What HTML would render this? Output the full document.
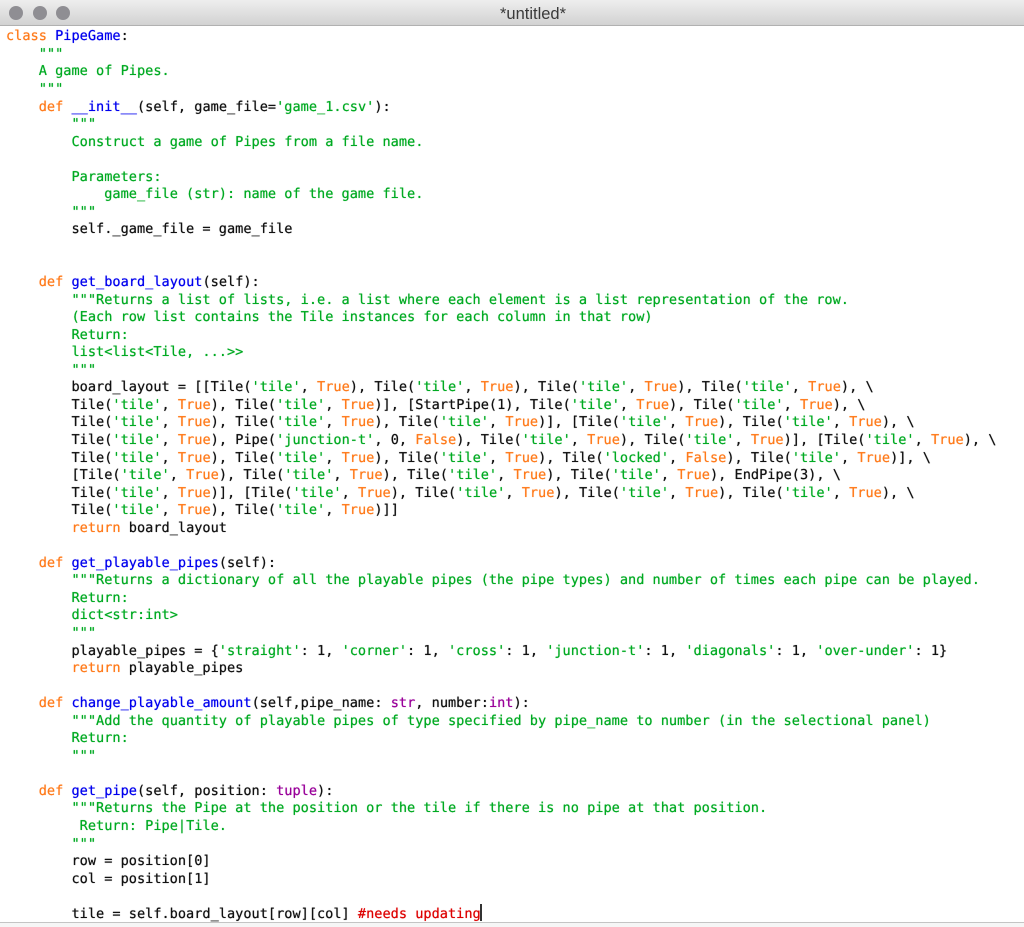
<!DOCTYPE html>
<html><head><meta charset="utf-8"><title>*untitled*</title>
<style>
html,body{margin:0;padding:0;background:#fff}
body{width:1024px;height:927px;position:relative;overflow:hidden}
#bar{position:absolute;left:0;top:0;width:1024px;height:25px;background:linear-gradient(#eeeeee,#d2d2d2);border-bottom:1px solid #b1b1b1}
.d{position:absolute;top:6px;width:14px;height:14px;border-radius:50%;background:#8f8e93}
#t{position:absolute;left:0;width:1066px;top:5px;text-align:center;font:16.5px/18px "Liberation Sans",sans-serif;color:#3a3a3a}
pre{position:absolute;left:6px;top:28.4px;margin:0;font:13.6px/17.55px "DejaVu Sans Mono",monospace;color:#111;text-rendering:geometricPrecision;white-space:pre;text-shadow:0 0 .6px currentColor}
.o{color:#ff7a1a}.g{color:#00aa22}.b{color:#0000ee}.p{color:#990099}.r{color:#dd0000}
#c{position:absolute;left:480px;top:904px;width:1.5px;height:17px;background:#333}
#f{position:absolute;left:0;top:922px;width:1024px;height:5px;background:#f6f6f6;border-top:1px solid #c4c4c4;box-sizing:border-box}
</style></head><body>
<div id="bar"></div>
<div class="d" style="left:9px"></div><div class="d" style="left:33px"></div><div class="d" style="left:56px"></div>
<div id="t">*untitled*</div>
<pre><span class="o">class</span> <span class="b">PipeGame</span>:
    <span class="g">"""</span>
    <span class="g">A game of Pipes.</span>
    <span class="g">"""</span>
    <span class="o">def</span> <span class="b">__init__</span>(self, game_file=<span class="g">'game_1.csv'</span>):
        <span class="g">"""</span>
        <span class="g">Construct a game of Pipes from a file name.</span>

        <span class="g">Parameters:</span>
            <span class="g">game_file (str): name of the game file.</span>
        <span class="g">"""</span>
        self._game_file = game_file


    <span class="o">def</span> <span class="b">get_board_layout</span>(self):
        <span class="g">"""Returns a list of lists, i.e. a list where each element is a list representation of the row.</span>
        <span class="g">(Each row list contains the Tile instances for each column in that row)</span>
        <span class="g">Return:</span>
        <span class="g">list&lt;list&lt;Tile, ...&gt;&gt;</span>
        <span class="g">"""</span>
        board_layout = [[Tile(<span class="g">'tile'</span>, <span class="o">True</span>), Tile(<span class="g">'tile'</span>, <span class="o">True</span>), Tile(<span class="g">'tile'</span>, <span class="o">True</span>), Tile(<span class="g">'tile'</span>, <span class="o">True</span>), \
        Tile(<span class="g">'tile'</span>, <span class="o">True</span>), Tile(<span class="g">'tile'</span>, <span class="o">True</span>)], [StartPipe(1), Tile(<span class="g">'tile'</span>, <span class="o">True</span>), Tile(<span class="g">'tile'</span>, <span class="o">True</span>), \
        Tile(<span class="g">'tile'</span>, <span class="o">True</span>), Tile(<span class="g">'tile'</span>, <span class="o">True</span>), Tile(<span class="g">'tile'</span>, <span class="o">True</span>)], [Tile(<span class="g">'tile'</span>, <span class="o">True</span>), Tile(<span class="g">'tile'</span>, <span class="o">True</span>), \
        Tile(<span class="g">'tile'</span>, <span class="o">True</span>), Pipe(<span class="g">'junction-t'</span>, 0, <span class="o">False</span>), Tile(<span class="g">'tile'</span>, <span class="o">True</span>), Tile(<span class="g">'tile'</span>, <span class="o">True</span>)], [Tile(<span class="g">'tile'</span>, <span class="o">True</span>), \
        Tile(<span class="g">'tile'</span>, <span class="o">True</span>), Tile(<span class="g">'tile'</span>, <span class="o">True</span>), Tile(<span class="g">'tile'</span>, <span class="o">True</span>), Tile(<span class="g">'locked'</span>, <span class="o">False</span>), Tile(<span class="g">'tile'</span>, <span class="o">True</span>)], \
        [Tile(<span class="g">'tile'</span>, <span class="o">True</span>), Tile(<span class="g">'tile'</span>, <span class="o">True</span>), Tile(<span class="g">'tile'</span>, <span class="o">True</span>), Tile(<span class="g">'tile'</span>, <span class="o">True</span>), EndPipe(3), \
        Tile(<span class="g">'tile'</span>, <span class="o">True</span>)], [Tile(<span class="g">'tile'</span>, <span class="o">True</span>), Tile(<span class="g">'tile'</span>, <span class="o">True</span>), Tile(<span class="g">'tile'</span>, <span class="o">True</span>), Tile(<span class="g">'tile'</span>, <span class="o">True</span>), \
        Tile(<span class="g">'tile'</span>, <span class="o">True</span>), Tile(<span class="g">'tile'</span>, <span class="o">True</span>)]]
        <span class="o">return</span> board_layout

    <span class="o">def</span> <span class="b">get_playable_pipes</span>(self):
        <span class="g">"""Returns a dictionary of all the playable pipes (the pipe types) and number of times each pipe can be played.</span>
        <span class="g">Return:</span>
        <span class="g">dict&lt;str:int&gt;</span>
        <span class="g">"""</span>
        playable_pipes = {<span class="g">'straight'</span>: 1, <span class="g">'corner'</span>: 1, <span class="g">'cross'</span>: 1, <span class="g">'junction-t'</span>: 1, <span class="g">'diagonals'</span>: 1, <span class="g">'over-under'</span>: 1}
        <span class="o">return</span> playable_pipes

    <span class="o">def</span> <span class="b">change_playable_amount</span>(self,pipe_name: <span class="p">str</span>, number:<span class="p">int</span>):
        <span class="g">"""Add the quantity of playable pipes of type specified by pipe_name to number (in the selectional panel)</span>
        <span class="g">Return:</span>
        <span class="g">"""</span>

    <span class="o">def</span> <span class="b">get_pipe</span>(self, position: <span class="p">tuple</span>):
        <span class="g">"""Returns the Pipe at the position or the tile if there is no pipe at that position.</span>
         <span class="g">Return: Pipe|Tile.</span>
        <span class="g">"""</span>
        row = position[0]
        col = position[1]

        tile = self.board_layout[row][col] <span class="r">#needs updating</span></pre>
<div id="c"></div>
<div id="f"></div>
</body></html>
